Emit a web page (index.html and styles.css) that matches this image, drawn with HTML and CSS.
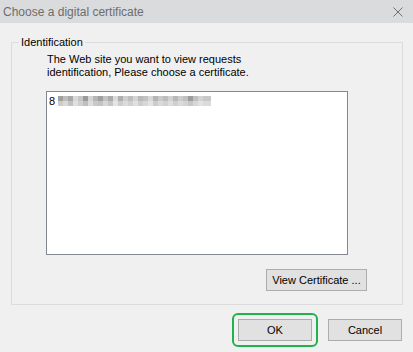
FILE: index.html
```html
<!DOCTYPE html>
<html lang="en">
<head>
  <meta charset="UTF-8" />
  <title>Choose a digital certificate</title>
  <link rel="stylesheet" href="styles.css">
</head>
<body>
  <div class="dialog">
    <div class="titlebar">
      <span class="title">Choose a digital certificate</span>
      <svg class="close" width="10" height="10" viewBox="0 0 10 10">
        <path d="M0.5 0.5 L9.5 9.5 M9.5 0.5 L0.5 9.5" stroke="#6f6f6f" stroke-width="1" fill="none"/>
      </svg>
    </div>

    <fieldset class="group">
      <legend>Identification</legend>
      <p class="intro">The Web site you want to view requests<br>identification, Please choose a certificate.</p>
      <div class="cert-list">
        <div class="cert-item">
          <span class="cert-num">8</span>
          <span class="cert-blur"></span>
        </div>
      </div>
      <div class="view-row">
        <button class="btn btn-view">View Certificate ...</button>
      </div>
    </fieldset>

    <div class="footer">
      <span class="highlight"><button class="btn">OK</button></span>
      <button class="btn">Cancel</button>
    </div>
  </div>
</body>
</html>
```

FILE: styles.css
```css
body {
  margin: 0;
  background: #f0f0f0;
  font-family: 'Liberation Sans', Arial, sans-serif;
  font-size: 11px;
  color: #000;
}

.dialog {
  width: 413px;
  height: 352px;
  overflow: hidden;
}

.titlebar {
  height: 23px;
  background: #dadbdd;
  display: flex;
  align-items: center;
  justify-content: space-between;
  padding: 0 10px 0 3px;
}

.title {
  font-size: 12px;
  color: #6d6d6d;
  padding-top: 1px;
}

.close {
  display: block;
}

.group {
  margin: 13px 10px 0 11px;
  padding: 0 0 13px 34px;
  border: 1px solid #dcdcdc;
}

.group legend {
  padding: 0 2px;
  margin-left: -27px;
  font-size: 11px;
  line-height: 13px;
}

.intro {
  margin: 4px 0 0 1px;
  line-height: 13px;
}

.cert-list {
  margin-top: 12px;
  width: 302px;
  height: 164px;
  box-sizing: border-box;
  border: 1px solid #828790;
  background: #fff;
  padding: 2px 1px;
}

.cert-item {
  display: flex;
  align-items: center;
  height: 13px;
}

.cert-num {
  width: 9px;
  padding-left: 1px;
}

.cert-blur {
  width: 153px;
  height: 10px;
  background:
    linear-gradient(90deg, #a0a0a0 0 5px, #bdbdbd 5px 10px, #a8a8a8 10px 15px, #d8d8d8 15px 20px, #c5c5c5 20px 25px, #9a9a9a 25px 30px, #d4d4d4 30px 35px, #b6b6b6 35px 40px, #a0a0a0 40px 45px, #c3c3c3 45px 50px, #ababab 50px 55px, #dadada 55px 60px, #afafaf 60px 65px, #cecece 65px 70px, #bebebe 70px 75px, #d4d4d4 75px 80px, #b9b9b9 80px 85px, #c2c2c2 85px 90px, #d7d7d7 90px 95px, #b4b4b4 95px 100px, #c9c9c9 100px 105px, #bcbcbc 105px 110px, #d2d2d2 110px 115px, #b8b8b8 115px 120px, #cccccc 120px 125px, #c0c0c0 125px 130px, #9c9c9c 130px 135px, #bfbfbf 135px 140px, #d3d3d3 140px 145px, #c8c8c8 145px 153px) top / 100% 5px no-repeat,
    linear-gradient(90deg, #cbcbcb 0 5px, #d9d9d9 5px 10px, #c2c2c2 10px 15px, #e0e0e0 15px 20px, #d0d0d0 20px 25px, #bfbfbf 25px 30px, #dddddd 30px 35px, #c9c9c9 35px 40px, #c3c3c3 40px 45px, #d7d7d7 45px 50px, #c7c7c7 50px 55px, #e4e4e4 55px 60px, #cdcdcd 60px 65px, #dbdbdb 65px 70px, #d1d1d1 70px 75px, #e1e1e1 75px 80px, #cecece 80px 85px, #d8d8d8 85px 90px, #e3e3e3 90px 95px, #cccccc 95px 100px, #dadada 100px 105px, #d2d2d2 105px 110px, #dedede 110px 115px, #cfcfcf 115px 120px, #dcdcdc 120px 125px, #d4d4d4 125px 130px, #c6c6c6 130px 135px, #d7d7d7 135px 140px, #e2e2e2 140px 145px, #dbdbdb 145px 153px) bottom / 100% 5px no-repeat;
}

.view-row {
  display: flex;
  justify-content: flex-end;
  margin: 14px 35px 0 0;
}

.btn {
  font-family: 'Liberation Sans', Arial, sans-serif;
  font-size: 11px;
  color: #000;
  height: 22px;
  width: 74px;
  padding: 0;
  background: #e1e1e1;
  border: 1px solid #adadad;
  border-radius: 0;
}

.btn-view {
  width: 101px;
}

.footer {
  display: flex;
  justify-content: flex-end;
  align-items: center;
  gap: 10px;
  padding: 8px 11px 0 0;
}

.highlight {
  display: block;
  padding: 4px;
  border: 2px solid #22b14c;
  border-radius: 6px;
}

.highlight .btn {
  display: block;
}
```
